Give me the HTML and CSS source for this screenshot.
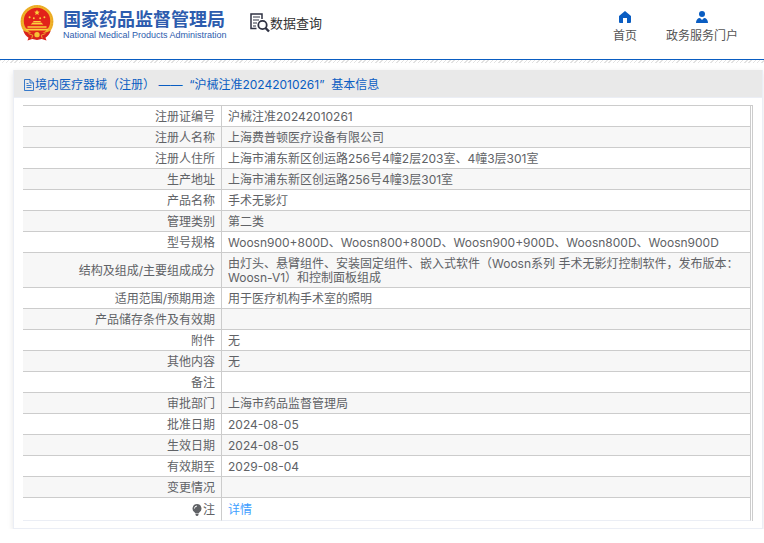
FILE: index.html
```html
<!DOCTYPE html>
<html lang="zh-CN">
<head>
    <meta charset="UTF-8">
    <meta name="viewport" content="width=device-width, initial-scale=1.0">
    <title>国家药品监督管理局 - 数据查询</title>
    <link rel="stylesheet" href="styles.css">
</head>
<body>

    <header class="header">
        <a class="brand" href="#">
            <svg class="emblem" viewBox="0 0 64 68" aria-hidden="true">
                <circle cx="32" cy="31" r="31" fill="#f0b429"/>
                <circle cx="32" cy="31" r="29" fill="none" stroke="#e09a25" stroke-width="1.5" stroke-dasharray="3 2"/>
                <circle cx="32" cy="30" r="25" fill="#e2231a"/>
                <path d="M32 9l1.500 3.400 3.700.3-2.800 2.400.9 3.700-3.300-2-3.300 2 .9-3.700-2.800-2.400 3.700-.3z" fill="#fbd03c"/>
                <g fill="#fbd03c">
                    <circle cx="18" cy="23" r="1.800"/>
                    <circle cx="26" cy="25" r="1.800"/>
                    <circle cx="38" cy="25" r="1.800"/>
                    <circle cx="46" cy="23" r="1.800"/>
                    <path d="M23 33l3-3h12l3 3zM20 37l3-3h18l3 3zM14 40h36v3H14zM10 45h44l-3 3H13z"/>
                </g>
                <path d="M6 48c6 4 13 5 19 5l7-2 7 2c6 0 13-1 19-5-2 7-6 11-10 14l2 5-9-3-9 2-9-2-9 3 2-5C12 59 8 55 6 48z" fill="#d9211c"/>
                <circle cx="32" cy="56" r="5" fill="#f6c135"/>
                <path d="M16 54l8 3-2 6M48 54l-8 3 2 6" fill="none" stroke="#f6c135" stroke-width="1.500"/>
            </svg>
            <span class="brand-text">
                <span class="brand-cn">国家药品监督管理局</span>
                <span class="brand-en">National Medical Products Administration</span>
            </span>
        </a>
        <a class="search-title" href="#">
            <svg class="search-icon" viewBox="0 0 20 20" fill="none" stroke="#2f3243" aria-hidden="true">
                <path d="M6.500 15.500H1V1h11v5" stroke-width="1.500"/>
                <path d="M3 4h7M3 7h6M3 10h4M3 13h3" stroke-width="1"/>
                <circle cx="12.500" cy="12" r="4.200" stroke-width="1.800"/>
                <path d="M15.500 15l3.500 3.500" stroke-width="2.400"/>
            </svg>
            <span>数据查询</span>
        </a>
        <nav class="nav">
            <a href="#">
                <svg viewBox="0 0 12 12" aria-hidden="true">
                    <path d="M6 0l6 5v6a1 1 0 0 1-1 1H8V7H4v5H1a1 1 0 0 1-1-1V5z" fill="#0a5dc2"/>
                </svg>
                <span>首页</span>
            </a>
            <a href="#">
                <svg viewBox="0 0 12 12" aria-hidden="true">
                    <circle cx="6" cy="3" r="3" fill="#0a5dc2"/>
                    <path d="M0 12c0-3 1.500-5 4-5l2 2 2-2c2.500 0 4 2 4 5z" fill="#0a5dc2"/>
                </svg>
                <span>政务服务门户</span>
            </a>
        </nav>
    </header>
    <div class="stripe"></div>

    <main class="panel">
        <h1 class="panel-title">
            <svg viewBox="0 0 10 12" fill="none" stroke="#0a5dc2" stroke-width=".8" aria-hidden="true">
                <path d="M.5.500v11h9V4L6 .5zM6 .5V4h3.500M2.500 6.500h5M2.500 8.500h5M2.500 4.500h2"/>
            </svg>
            <span>境内医疗器械（注册） ——&nbsp; “沪械注准20242010261”&nbsp; 基本信息</span>
        </h1>

        <div class="table-wrap">
            <table class="info">
                <tbody>
                    <tr><th scope="row">注册证编号</th><td>沪械注准20242010261</td></tr>
                    <tr><th scope="row">注册人名称</th><td>上海费普顿医疗设备有限公司</td></tr>
                    <tr><th scope="row">注册人住所</th><td>上海市浦东新区创运路256号4幢2层203室、4幢3层301室</td></tr>
                    <tr><th scope="row">生产地址</th><td>上海市浦东新区创运路256号4幢3层301室</td></tr>
                    <tr><th scope="row">产品名称</th><td>手术无影灯</td></tr>
                    <tr><th scope="row">管理类别</th><td>第二类</td></tr>
                    <tr><th scope="row">型号规格</th><td>Woosn900+800D、Woosn800+800D、Woosn900+900D、Woosn800D、Woosn900D</td></tr>
                    <tr><th scope="row">结构及组成/主要组成成分</th><td>由灯头、悬臂组件、安装固定组件、嵌入式软件（Woosn系列 手术无影灯控制软件，发布版本：Woosn-V1）和控制面板组成</td></tr>
                    <tr><th scope="row">适用范围/预期用途</th><td>用于医疗机构手术室的照明</td></tr>
                    <tr><th scope="row">产品储存条件及有效期</th><td></td></tr>
                    <tr><th scope="row">附件</th><td>无</td></tr>
                    <tr><th scope="row">其他内容</th><td>无</td></tr>
                    <tr><th scope="row">备注</th><td></td></tr>
                    <tr><th scope="row">审批部门</th><td>上海市药品监督管理局</td></tr>
                    <tr><th scope="row">批准日期</th><td>2024-08-05</td></tr>
                    <tr><th scope="row">生效日期</th><td>2024-08-05</td></tr>
                    <tr><th scope="row">有效期至</th><td>2029-08-04</td></tr>
                    <tr><th scope="row">变更情况</th><td></td></tr>
                    <tr class="note">
                        <th scope="row">
                            <svg class="bulb" viewBox="0 0 10 12" aria-hidden="true">
                                <path d="M5 0a4.500 4.500 0 0 1 2.500 8.200L6.500 9.500h-3L2.500 8.200A4.500 4.500 0 0 1 5 0zM3.500 10h3v1l-1 1h-1l-1-1z" fill="#606266"/>
                                <path d="M2.500 4.500A2.500 2.500 0 0 1 5 2" fill="none" stroke="#fff"/>
                            </svg>注
                        </th>
                        <td><a href="#">详情</a></td>
                    </tr>
                </tbody>
            </table>
        </div>
    </main>

</body>
</html>
```
FILE: styles.css
```css
* {
    margin: 0;
    padding: 0;
    box-sizing: border-box;
}

body {
    font-family: Inter, "Noto Sans CJK SC", sans-serif;
    font-size: 12px;
    line-height: 14px;
    color: #606266;
    background-color: #fff;
}

a {
    text-decoration: none;
}

/* Header */
.header {
    display: flex;
    align-items: flex-start;
    height: 60px;
    padding: 5px 26px 0 20px;
    border-bottom: 1px solid #0a5dc2;
}

.brand {
    display: flex;
    gap: 9px;
    color: #2d5cae;
}

.emblem {
    width: 34px;
    height: 36px;
}

.brand-text {
    display: flex;
    flex-direction: column;
    width: 160px;
    padding-top: 3px;
    white-space: nowrap;
}

.brand-cn {
    font-family: "Noto Sans CJK SC", sans-serif;
    font-size: 18px;
    font-weight: bold;
    line-height: 20px;
}

.brand-en {
    font-family: "Liberation Sans", Arial, sans-serif;
    font-size: 9px;
    line-height: 14px;
}

.search-title {
    display: flex;
    align-items: center;
    margin-left: 27px;
    padding-top: 8px;
    font-size: 13px;
    line-height: 20px;
    color: #333;
}

.search-icon {
    width: 20px;
    height: 20px;
}

.nav {
    display: flex;
    gap: 29px;
    margin-left: auto;
    padding-top: 6px;
}

.nav a {
    display: flex;
    flex-direction: column;
    align-items: center;
    gap: 6px;
    color: #555;
}

.nav svg {
    width: 12px;
    height: 12px;
}

.stripe {
    height: 3px;
    background: repeating-linear-gradient(135deg, #e2e2e2 0, #e2e2e2 1px, #fff 1px, #fff 3px);
}

/* Panel */
.panel {
    margin: 7px 1px 0 13px;
    border: 1px solid #ebeef5;
    border-top: none;
    box-shadow: 0 2px 6px rgba(0, 0, 0, 0.1);
}

.panel-title {
    display: flex;
    align-items: center;
    height: 28px;
    padding: 2px 10px 0;
    font-size: 12px;
    font-weight: normal;
    color: #0a5dc2;
    background-color: #e9e9e9;
    border-bottom: 1px solid #ebeef5;
}

.panel-title svg {
    width: 10px;
    height: 12px;
    margin-right: 1px;
}

/* Info table */
.table-wrap {
    margin: 7px 9px;
    padding-right: 1px;
    border-top: 1px solid #ccc;
    border-right: 1px solid #ccc;
}

.info {
    width: 100%;
    border-collapse: separate;
    border-spacing: 0;
    table-layout: fixed;
}

.info th,
.info td {
    padding: 4px 6px 2px;
    border-right: 1px solid #ccc;
    border-bottom: 1px solid #ccc;
    font-weight: normal;
    vertical-align: middle;
}

.info th {
    width: 199px;
    text-align: right;
}

.info td {
    height: 21px;
}

.info tr:nth-child(even) {
    background-color: #f7f7f7;
}

.info .note th,
.info .note td {
    height: 23px;
    border-bottom-color: #ebeef5;
}

.info .note a {
    color: #409eff;
}

.bulb {
    width: 10px;
    height: 12px;
    margin-right: 1px;
    vertical-align: -2px;
}
```
